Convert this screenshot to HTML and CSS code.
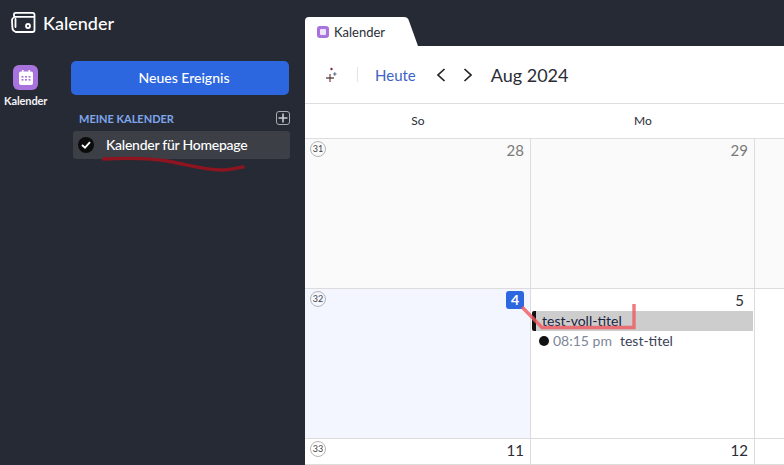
FILE: index.html
```html
<!DOCTYPE html>
<html lang="de">
<head>
<meta charset="utf-8">
<title>Kalender</title>
<link rel="stylesheet" href="styles.css">
</head>
<body>
<div class="app">
  <aside class="sidebar">
    <header class="brand">
      <svg class="brand-icon" width="26" height="24" viewBox="0 0 26 24" fill="none" stroke="#fff" stroke-width="1.800" stroke-linecap="round" stroke-linejoin="round"><path d="M4 5V3.500Q4 1.800 5.800 1.800H22.500Q24.500 1.800 24.500 3.800V19Q24.500 21 22.500 21H6"/><path d="M4.500 5.800H24"/><path d="M4 6.500Q2 7 2 9L2.400 17Q2.600 20 6 21"/><path d="M5.500 8V16"/><circle cx="18" cy="15" r="2"/></svg>
      <span class="brand-title">Kalender</span>
    </header>
    <div class="side-body">
      <nav class="rail">
        <div class="rail-icon">
          <svg width="14" height="15" viewBox="0 0 14 15"><path fill="#fff" d="M3 0h1.500v1.500h5V0H11v1.500h1A2 2 0 0 1 14 3.500v9.500a2 2 0 0 1-2 2H2a2 2 0 0 1-2-2V3.500a2 2 0 0 1 2-2h1z"/><g fill="#a873dc"><rect x="2.500" y="6" width="2" height="1.600"/><rect x="6" y="6" width="2" height="1.600"/><rect x="9.500" y="6" width="2" height="1.600"/><rect x="2.500" y="9" width="2" height="1.600"/><rect x="6" y="9" width="2" height="1.600"/><rect x="9.500" y="9" width="2" height="1.600"/></g></svg>
        </div>
        <span class="rail-label">Kalender</span>
      </nav>
      <section class="panel">
        <button class="new-event">Neues Ereignis</button>
        <div class="section-head">
          <span class="section-title">MEINE KALENDER</span>
          <span class="add-box"><svg width="10" height="10" viewBox="0 0 10 10"><path d="M5 .5v9M.5 5h9" stroke="#c9cbd0" stroke-width="1.600"/></svg></span>
        </div>
        <div class="cal-item">
          <span class="cal-check"><svg width="10" height="8" viewBox="0 0 10 8" fill="none"><path d="M1 4l3 2.700L9 1.200" stroke="#fff" stroke-width="1.800"/></svg></span>
          <span class="cal-name">Kalender für Homepage</span>
        </div>
      </section>
    </div>
  </aside>
  <main class="main">
    <div class="tabbar">
      <div class="tab">
        <svg class="tab-shape" width="114" height="30" viewBox="0 0 114 30"><path fill="#fff" d="M0 30V5Q0 1 4 1H99Q103 1 104 5L113 30Z"/></svg>
        <span class="tab-icon"><span class="tab-icon-inner"></span></span>
        <span class="tab-label">Kalender</span>
      </div>
    </div>
    <div class="toolbar">
      <svg class="spark" width="13" height="15" viewBox="0 0 13 15" fill="none"><path d="M5 7v8" stroke="#8a3a4a" stroke-width="1.200"/><path d="M1 11h8" stroke="#3a3028" stroke-width="1.200"/><circle cx="6.500" cy="2" r="1.200" fill="#7a2a3c"/><path d="M9.800 5.300v3.400M8.100 7h3.400" stroke="#4f6a8a" stroke-width="1.100"/></svg>
      <span class="divider"></span>
      <span class="today">Heute</span>
      <svg class="chev" width="10" height="14" viewBox="0 0 10 14" fill="none"><path d="M8.500 1L2 7l6.500 6" stroke="#222" stroke-width="1.700"/></svg>
      <svg class="chev chev-next" width="10" height="14" viewBox="0 0 10 14" fill="none"><path d="M1.500 1L8 7l-6.500 6" stroke="#222" stroke-width="1.700"/></svg>
      <span class="month">Aug 2024</span>
    </div>
    <div class="week-head">
      <div class="dow">So</div>
      <div class="dow">Mo</div>
      <div class="dow"></div>
    </div>
    <div class="grid">
      <div class="cell past">
        <span class="wk">31</span><span class="num">28</span>
      </div>
      <div class="cell past">
        <span class="num">29</span>
      </div>
      <div class="cell past last"></div>

      <div class="cell today-cell">
        <span class="wk">32</span><span class="num num-today">4</span>
      </div>
      <div class="cell">
        <span class="num num-single">5</span>
        <div class="event-bar">test-voll-titel</div>
        <div class="event-line">
          <span class="dot"></span>
          <span class="time">08:15 pm</span>
          <span class="ev-title">test-titel</span>
        </div>
      </div>
      <div class="cell last"></div>

      <div class="cell">
        <span class="wk">33</span><span class="num">11</span>
      </div>
      <div class="cell">
        <span class="num">12</span>
      </div>
      <div class="cell last"></div>
    </div>
  </main>
  <svg class="ink" width="784" height="465" viewBox="0 0 784 465" fill="none">
    <path d="M103.500 159C125 158 150 158 170 161.500C190 165.500 205 170 222 170C230 170 237 168 243 167" stroke="#8e1420" stroke-width="3.400" stroke-linecap="round"/>
    <path d="M522 307L542 327.500H634V304" stroke="#ee5a60" stroke-opacity=".82" stroke-width="3.400" stroke-linejoin="miter"/>
  </svg>
</div>
</body>
</html>
```
FILE: styles.css
```css
* { box-sizing: border-box; }
html, body { margin: 0; padding: 0; }
body { font-family: Lato, "Open Sans", sans-serif; background: #262a35; overflow: hidden; }
.app { position: relative; display: flex; width: 784px; height: 465px; overflow: hidden; }

.sidebar { width: 305px; flex: none; background: #262a35; color: #fff; display: flex; flex-direction: column; }
.brand { display: flex; align-items: center; height: 46px; padding-left: 10px; gap: 7px; }
.brand-title { font-size: 18px; font-weight: 500; line-height: 24px; }
.side-body { display: flex; padding-top: 15px; }
.rail { width: 71px; flex: none; display: flex; flex-direction: column; align-items: flex-start; padding-top: 4px; }
.rail-icon { width: 25px; height: 25px; margin-left: 13px; border-radius: 6px; background: #a873dc; display: flex; align-items: center; justify-content: center; }
.rail-label { font-size: 11px; font-weight: 700; line-height: 14px; margin: 4px 0 0 4px; color: #f2f2f4; letter-spacing: -.1px; }
.panel { width: 219px; flex: none; display: flex; flex-direction: column; }
.new-event { height: 34px; width: 218px; border: 0; border-radius: 5px; background: #2c67df; color: #fff; font: 500 14px/34px Lato, sans-serif; padding: 0 0 0 8px; }
.section-head { display: flex; align-items: center; justify-content: space-between; height: 16px; margin-top: 15px; padding-left: 8px; }
.section-title { font-size: 11px; font-weight: 700; color: #7fa6ee; }
.add-box { width: 14px; height: 14px; border: 1px solid #a9abb1; border-radius: 3px; display: flex; align-items: center; justify-content: center; }
.cal-item { display: flex; align-items: center; height: 28px; margin: 5px 0 0 2px; padding-left: 5px; background: #3d3f47; border-radius: 3px; }
.cal-check { width: 16px; height: 16px; border-radius: 50%; background: #0c0c0c; display: flex; align-items: center; justify-content: center; flex: none; }
.cal-name { margin: 0 0 2px 12px; font-size: 14px; font-weight: 500; color: #fff; letter-spacing: -.25px; }

.main { flex: 1; min-width: 0; display: flex; flex-direction: column; background: #fff; }
.tabbar { height: 46px; flex: none; background: #262a35; display: flex; align-items: flex-end; }
.tab { position: relative; width: 114px; height: 30px; display: flex; align-items: center; padding: 2px 0 0 12px; gap: 5px; }
.tab-shape { position: absolute; left: 0; top: 0; }
.tab-icon { position: relative; width: 12px; height: 12px; border-radius: 3px; background: #a873dc; display: flex; align-items: center; justify-content: center; }
.tab-icon-inner { width: 6px; height: 6px; background: #efe4fa; border-radius: 1px; }
.tab-label { position: relative; font-size: 13px; color: #2a2d36; }

.toolbar { height: 58px; flex: none; display: flex; align-items: center; border-bottom: 1px solid #dedede; padding-left: 20px; }
.divider { width: 1px; height: 15px; background: #e3e5ee; margin-left: 19px; }
.today { margin-left: 17px; font-size: 15px; color: #3d63c4; }
.chev { margin-left: 20px; }
.chev-next { margin-left: 17px; }
.month { margin-left: 18px; font-size: 18px; color: #2a2d36; }

.week-head { height: 35px; flex: none; display: grid; grid-template-columns: 226px 224px 1fr; border-bottom: 1px solid #dedede; }
.dow { display: flex; align-items: center; justify-content: center; padding-bottom: 2px; font-size: 12px; color: #2a2d36; }

.grid { flex: 1; display: grid; grid-template-columns: 226px 224px 1fr; grid-template-rows: 150px 150px 1fr; }
.cell { position: relative; display: flex; flex-direction: column; border-right: 1px solid #dcdcdc; border-bottom: 1px solid #dcdcdc; min-width: 0; }
.cell.last { border-right: 0; }
.past { background: #fafafa; }
.today-cell { background: #f3f6ff; }
.wk { position: absolute; left: 5px; top: 2px; width: 16px; height: 16px; border: 1px solid #b5b5b5; border-radius: 50%; font-size: 9px; line-height: 14px; text-align: center; color: #444; }
.num { align-self: flex-end; margin: 1px 6px 0 0; height: 20px; font-size: 15px; line-height: 20px; color: #2a2d36; }
.num.num-single { margin-right: 10px; }
.past .num { color: #7a7a7a; }
.num.num-today { width: 18px; height: 18px; margin: 2px 6px 0 0; border-radius: 3px; background: #2c67df; color: #fff; font-weight: 700; font-size: 14px; line-height: 18px; text-align: center; }
.event-bar { height: 20px; margin: 1px 1px 0 1px; padding-left: 6px; background: #cdcdcd; border-left: 4px solid #111; font-size: 14px; line-height: 20px; color: #1c2340; border-radius: 2px 0 0 2px; }
.event-line { display: flex; align-items: center; height: 20px; margin-left: 8px; font-size: 14px; }
.dot { width: 10px; height: 10px; border-radius: 50%; background: #111; }
.time { margin: 0 0 2px 4px; color: #7d8797; }
.ev-title { margin: 0 0 2px 8px; color: #3a4356; }

.ink { position: absolute; left: 0; top: 0; pointer-events: none; }
```
